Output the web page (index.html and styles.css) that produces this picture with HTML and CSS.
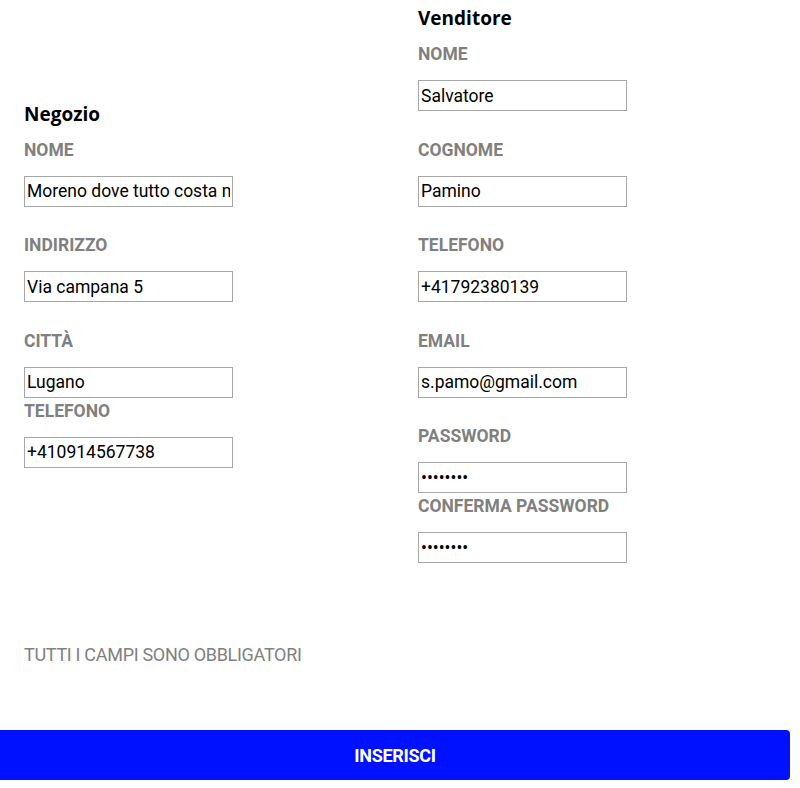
FILE: index.html
```html
<!DOCTYPE html>
<html lang="it">
<head>
<meta charset="utf-8">
<title>Inserisci negozio</title>
<link rel="stylesheet" href="styles.css">
</head>
<body>
<form class="form">
  <div class="columns">
    <section class="col col-shop">
      <h2 class="col-title">Negozio</h2>
      <div class="field">
        <label class="label">NOME</label>
        <input class="input" type="text" value="Moreno dove tutto costa meno">
      </div>
      <div class="field">
        <label class="label">INDIRIZZO</label>
        <input class="input" type="text" value="Via campana 5">
      </div>
      <div class="field field-tight">
        <label class="label">CITTÀ</label>
        <input class="input" type="text" value="Lugano">
      </div>
      <div class="field field-last">
        <label class="label">TELEFONO</label>
        <input class="input" type="text" value="+410914567738">
      </div>
    </section>
    <section class="col">
      <h2 class="col-title">Venditore</h2>
      <div class="field">
        <label class="label">NOME</label>
        <input class="input" type="text" value="Salvatore">
      </div>
      <div class="field">
        <label class="label">COGNOME</label>
        <input class="input" type="text" value="Pamino">
      </div>
      <div class="field">
        <label class="label">TELEFONO</label>
        <input class="input" type="text" value="+41792380139">
      </div>
      <div class="field">
        <label class="label">EMAIL</label>
        <input class="input" type="text" value="s.pamo@gmail.com">
      </div>
      <div class="field field-tight">
        <label class="label">PASSWORD</label>
        <input class="input" type="password" value="12345678">
      </div>
      <div class="field field-last">
        <label class="label">CONFERMA PASSWORD</label>
        <input class="input" type="password" value="12345678">
      </div>
    </section>
  </div>
  <p class="note">TUTTI I CAMPI SONO OBBLIGATORI</p>
  <button class="submit" type="button">INSERISCI</button>
</form>
</body>
</html>
```
FILE: styles.css
```css
html, body {
  margin: 0;
  padding: 0;
  background: #fff;
}
body {
  font-family: Roboto, "Liberation Sans", sans-serif;
  color: #000;
}
.form {
  display: block;
}
.columns {
  display: grid;
  grid-template-columns: 394px 1fr;
  align-items: start;
  padding: 6px 0 0 24px;
}
.col-shop {
  padding-top: 95.5px;
}
.col-title {
  font-family: "Open Sans", sans-serif;
  font-weight: 700;
  font-size: 19px;
  line-height: 24px;
  margin: 0 0 14px 0;
  color: #000;
}
.field {
  display: flex;
  flex-direction: column;
  align-items: flex-start;
  margin-bottom: 28.5px;
}
.field-tight {
  margin-bottom: 3px;
}
.field-last {
  margin-bottom: 0;
}
.label {
  font-size: 17.5px;
  font-weight: 700;
  line-height: 20px;
  color: #808080;
  margin-bottom: 16px;
}
.input {
  box-sizing: border-box;
  width: 209px;
  height: 31px;
  border: 1px solid #a6a6a6;
  border-radius: 0;
  padding: 0 2px;
  margin: 0;
  font-family: Roboto, sans-serif;
  font-size: 17.5px;
  color: #000;
  background: #fff;
  outline: none;
}
.note {
  margin: 81px 0 0 24px;
  font-size: 18px;
  line-height: 22px;
  color: #808080;
  letter-spacing: -0.3px;
}
.submit {
  display: block;
  margin: 64px 0 0 0;
  width: 790px;
  height: 50px;
  border: 0;
  border-radius: 0 4px 4px 0;
  background: #0011ff;
  color: #fff;
  font-family: Roboto, sans-serif;
  font-weight: 700;
  font-size: 18px;
  letter-spacing: -0.3px;
  cursor: pointer;
}
```
